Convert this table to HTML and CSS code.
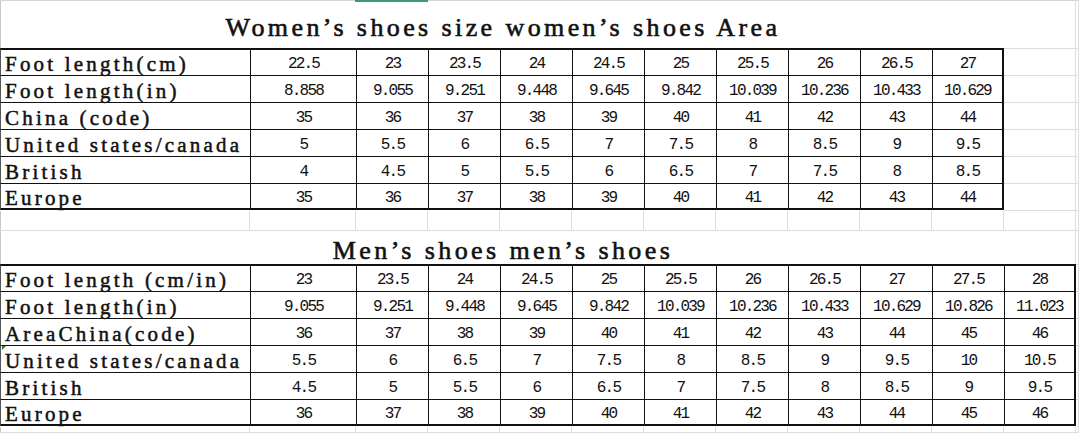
FILE: index.html
```html
<!DOCTYPE html>
<html>
<head>
<meta charset="utf-8">
<link rel="stylesheet" href="styles.css">
</head>
<body>
<div class="sheet">
  <div class="sel"></div>
  <div class="title t1">Women’s shoes size women’s shoes Area</div>
  <div class="tbl w">
    <div>Foot length(cm)</div><div>22.5</div><div>23</div><div>23.5</div><div>24</div><div>24.5</div><div>25</div><div>25.5</div><div>26</div><div>26.5</div><div>27</div>
    <div>Foot length(in)</div><div>8.858</div><div>9.055</div><div>9.251</div><div>9.448</div><div>9.645</div><div>9.842</div><div>10.039</div><div>10.236</div><div>10.433</div><div>10.629</div>
    <div>China (code)</div><div>35</div><div>36</div><div>37</div><div>38</div><div>39</div><div>40</div><div>41</div><div>42</div><div>43</div><div>44</div>
    <div>United states/canada</div><div>5</div><div>5.5</div><div>6</div><div>6.5</div><div>7</div><div>7.5</div><div>8</div><div>8.5</div><div>9</div><div>9.5</div>
    <div>British</div><div>4</div><div>4.5</div><div>5</div><div>5.5</div><div>6</div><div>6.5</div><div>7</div><div>7.5</div><div>8</div><div>8.5</div>
    <div>Europe</div><div>35</div><div>36</div><div>37</div><div>38</div><div>39</div><div>40</div><div>41</div><div>42</div><div>43</div><div>44</div>
  </div>
  <div class="title t2">Men’s shoes men’s shoes</div>
  <div class="tbl m">
    <div>Foot length (cm/in)</div><div>23</div><div>23.5</div><div>24</div><div>24.5</div><div>25</div><div>25.5</div><div>26</div><div>26.5</div><div>27</div><div>27.5</div><div>28</div>
    <div>Foot length(in)</div><div>9.055</div><div>9.251</div><div>9.448</div><div>9.645</div><div>9.842</div><div>10.039</div><div>10.236</div><div>10.433</div><div>10.629</div><div>10.826</div><div>11.023</div>
    <div>AreaChina(code)</div><div>36</div><div>37</div><div>38</div><div>39</div><div>40</div><div>41</div><div>42</div><div>43</div><div>44</div><div>45</div><div>46</div>
    <div class="flag">United states/canada</div><div>5.5</div><div>6</div><div>6.5</div><div>7</div><div>7.5</div><div>8</div><div>8.5</div><div>9</div><div>9.5</div><div>10</div><div>10.5</div>
    <div>British</div><div>4.5</div><div>5</div><div>5.5</div><div>6</div><div>6.5</div><div>7</div><div>7.5</div><div>8</div><div>8.5</div><div>9</div><div>9.5</div>
    <div>Europe</div><div>36</div><div>37</div><div>38</div><div>39</div><div>40</div><div>41</div><div>42</div><div>43</div><div>44</div><div>45</div><div>46</div>
  </div>
  <div class="c"></div><div class="c"></div><div class="c"></div><div class="c"></div><div class="c"></div><div class="c"></div><div class="c"></div><div class="c"></div>
  <div class="c"></div><div class="c"></div><div class="c"></div><div class="c"></div><div class="c"></div><div class="c"></div><div class="c"></div><div class="c"></div>
  <div class="c"></div><div class="c"></div><div class="c"></div><div class="c"></div><div class="c"></div><div class="c"></div><div class="c"></div><div class="c"></div>
  <div class="c"></div><div class="c"></div><div class="c"></div><div class="c"></div><div class="c"></div><div class="c"></div><div class="c"></div><div class="c"></div>
  <div class="c"></div><div class="c"></div><div class="c"></div><div class="c"></div><div class="c"></div><div class="c"></div><div class="c"></div><div class="c"></div>
  <div class="c"></div><div class="c"></div><div class="c"></div><div class="c"></div><div class="c"></div><div class="c"></div><div class="c"></div><div class="c"></div>
</div>
</body>
</html>
```

FILE: styles.css
```css
html, body {
  margin: 0;
  padding: 0;
  background: #fff;
}
.sheet {
  position: relative;
  width: 1079px;
  height: 433px;
  overflow: hidden;
  display: grid;
  grid-template-columns: 250px 106px repeat(10, 72px) 3px;
  grid-template-rows: 49px repeat(6, 27px) 20px 34px repeat(6, 27px) 6px;
  background:
    linear-gradient(#d6d6d6, #d6d6d6) top left / 100% 1px no-repeat,
    linear-gradient(#c8c8c8, #c8c8c8) top left / 1px 100% no-repeat,
    #fff;
  color: #111;
}
.sel {
  position: absolute;
  left: 355px;
  top: 0;
  width: 73px;
  height: 2px;
  background: #3f9582;
}
.c {
  box-sizing: border-box;
  border-right: 1px solid #dcdcdc;
  border-bottom: 1px solid #dcdcdc;
}
.title {
  grid-column: 1 / 12;
  display: flex;
  align-items: center;
  justify-content: center;
  font-family: "Liberation Serif", "DejaVu Serif", serif;
  font-size: 26px;
  letter-spacing: 3.4px;
  -webkit-text-stroke: 0.6px #111;
  white-space: nowrap;
  box-sizing: border-box;
}
.t1 {
  grid-row: 1;
  padding-top: 6px;
  padding-left: 2px;
}
.t2 {
  grid-row: 9;
  padding-top: 6px;
  padding-left: 2px;
}
.tbl {
  display: grid;
  grid-template-rows: repeat(6, 27px);
  background: #fff;
  margin-top: -1px;
}
.tbl.w {
  grid-column: 1 / 12;
  grid-row: 2 / 8;
  grid-template-columns: 250px 106px repeat(9, 72px);
}
.tbl.m {
  grid-column: 1 / 13;
  grid-row: 10 / 16;
  grid-template-columns: 250px 106px repeat(10, 72px);
}
.tbl > div {
  position: relative;
  box-sizing: border-box;
  border-left: 1px solid #111;
  border-top: 1px solid #111;
  display: flex;
  align-items: center;
  justify-content: center;
  padding-top: 3px;
  font-family: "Liberation Mono", "DejaVu Sans Mono", monospace;
  font-size: 16px;
  letter-spacing: -1.8px;
  white-space: nowrap;
}
.w > div:nth-child(11n+1),
.m > div:nth-child(12n+1) {
  justify-content: flex-start;
  padding-left: 4px;
  padding-top: 4px;
  font-family: "Liberation Serif", "DejaVu Serif", serif;
  font-size: 21px;
  letter-spacing: 3.2px;
  -webkit-text-stroke: 0.5px #111;
  border-left-color: #555;
}
.w > div:nth-child(-n+11),
.m > div:nth-child(-n+12) {
  border-top-width: 2px;
}
.w > div:nth-child(11n),
.m > div:nth-child(12n) {
  border-right: 2px solid #111;
}
.w > div:nth-last-child(-n+11),
.m > div:nth-last-child(-n+12) {
  border-bottom: 2px solid #111;
}
.flag::before {
  content: "";
  position: absolute;
  left: 1px;
  top: 0;
  border-top: 4px solid #2e7d32;
  border-right: 4px solid transparent;
}
```
